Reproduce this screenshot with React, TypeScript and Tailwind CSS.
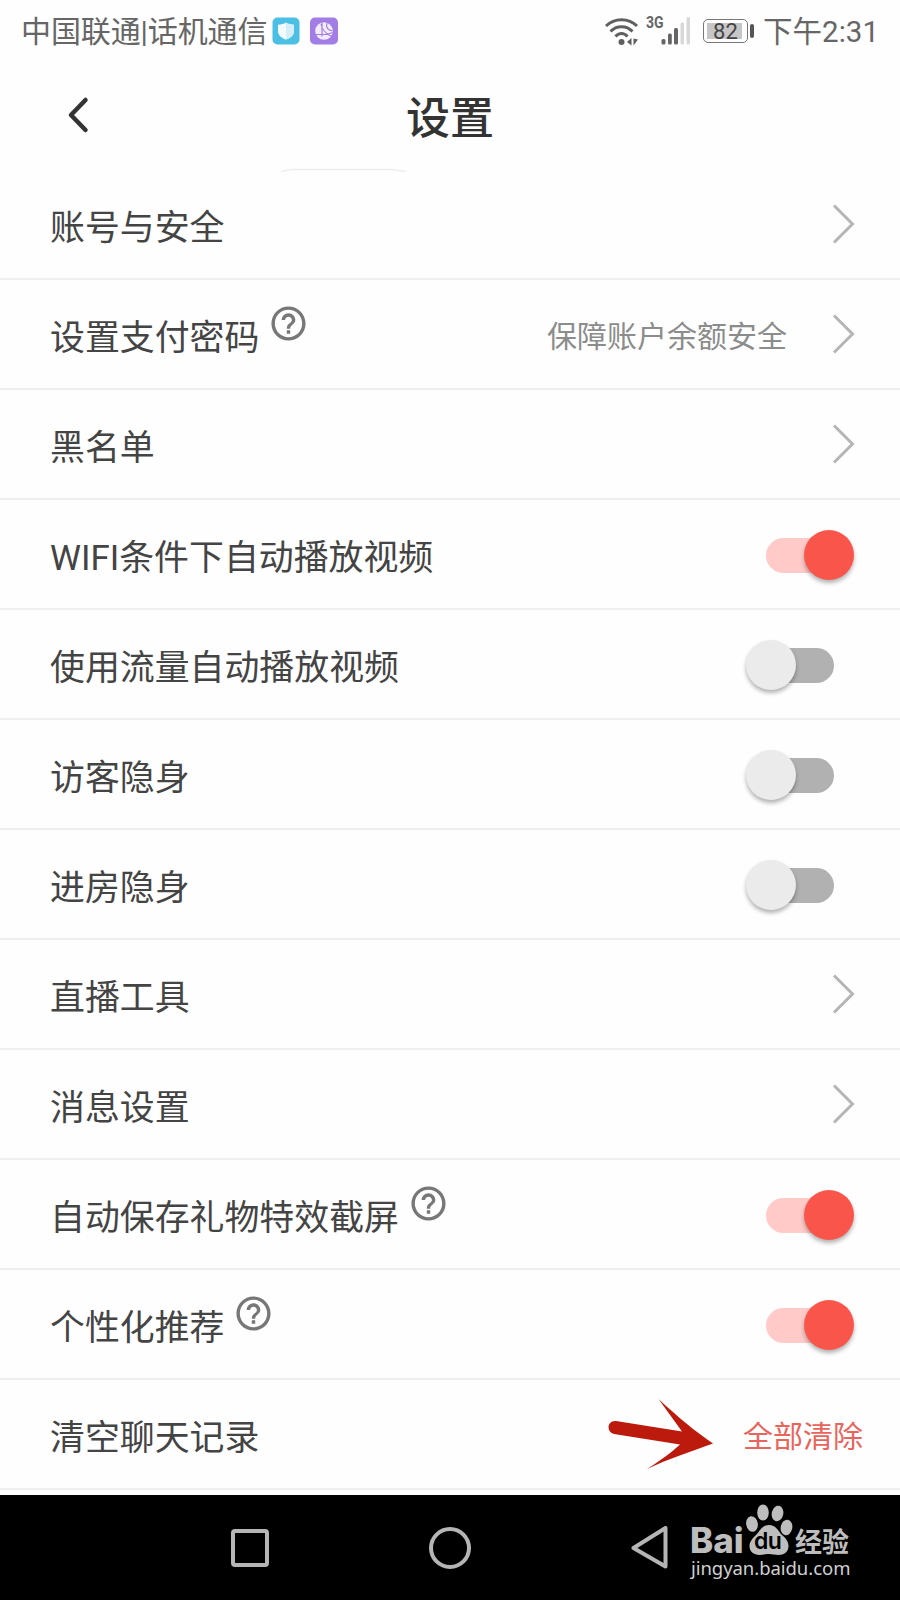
import clsx from "clsx";
import { MdHelpOutline } from "react-icons/md";

interface SettingItem {
  label: string;
  help?: boolean;
  hint?: string;
  toggle?: boolean; // undefined = 不是开关行
  action?: string;
}

const ITEMS: SettingItem[] = [
  { label: "账号与安全" },
  { label: "设置支付密码", help: true, hint: "保障账户余额安全" },
  { label: "黑名单" },
  { label: "WIFI条件下自动播放视频", toggle: true },
  { label: "使用流量自动播放视频", toggle: false },
  { label: "访客隐身", toggle: false },
  { label: "进房隐身", toggle: false },
  { label: "直播工具" },
  { label: "消息设置" },
  { label: "自动保存礼物特效截屏", help: true, toggle: true },
  { label: "个性化推荐", help: true, toggle: true },
  { label: "清空聊天记录", action: "全部清除" },
];

function ShieldIcon() {
  return (
    <svg width="28" height="28" viewBox="0 0 28 28">
      <rect x="0.5" y="0.5" width="27" height="27" rx="5" fill="#4bbfe4" />
      <path d="M14 5.500c2 1.500 4.700 2 8 2.200v6.300c0 4.500-3.500 7-8 8.500-4.500-1.500-8-4-8-8.500V7.700c3.300-.2 6-.7 8-2.200z" fill="#f4fbfe" />
      <path d="M14 5.500c2 1.500 4.700 2 8 2.200v6.300c0 4.500-3.500 7-8 8.500z" fill="#d5effa" />
    </svg>
  );
}

function GlobeIcon() {
  return (
    <svg width="28" height="28" viewBox="0 0 28 28">
      <rect x="0" y="0.5" width="28" height="27" rx="5" fill="#a27de6" />
      <circle cx="14" cy="14" r="8.800" fill="#f3ecff" />
      <path d="M12 5.500v14M5.500 17.500h11l6-2M11 7c1 5 5 10 10 12M17 6c-1.500 4 1 8 5.500 7.500" stroke="#a27de6" strokeWidth="1.200" fill="none" />
    </svg>
  );
}

function WifiIcon() {
  return (
    <svg width="34" height="29" viewBox="0 0 34 29" fill="none" stroke="#5f5f5f" strokeWidth="3">
      <path d="M1 9C9.500 0.500 23.500 0.500 32 9" />
      <path d="M5.500 14.500C11.500 8 21.500 8 27.500 14.500" />
      <path d="M10.500 19.500C14 15.500 19 15.500 22.500 19.500" />
      <circle cx="16.500" cy="25" r="3" fill="#5f5f5f" stroke="none" />
      <path d="M26.500 21v7.500l-4.500-3.500zM28.500 21.500v7l4.500-6z" fill="#5f5f5f" stroke="none" />
    </svg>
  );
}

function SignalIcon() {
  return (
    <svg width="30" height="28" viewBox="0 0 30 28">
      <rect x="0.500" y="22" width="4" height="5.500" rx="1.500" fill="#666" />
      <rect x="7" y="16.500" width="3.800" height="11" rx="1.500" fill="#666" />
      <rect x="13" y="11" width="4" height="16.500" rx="1.500" fill="#666" />
      <rect x="19.500" y="5.500" width="3.500" height="22" rx="1.500" fill="#d8d8d8" />
      <rect x="25.500" y="0" width="3.500" height="27.500" rx="1.500" fill="#d8d8d8" />
    </svg>
  );
}

function StatusBar() {
  return (
    <div className="flex h-[62px] items-center pl-[21px] pr-[21px] text-[30px] leading-none text-[#666]">
      <span className="mt-[2px] whitespace-nowrap tracking-[-0.1px]">中国联通|话机通信</span>
      <div className="ml-[5px] flex gap-[10px]">
        <ShieldIcon />
        <GlobeIcon />
      </div>
      <div className="ml-auto flex items-center">
        <WifiIcon />
        <span className="mb-[16px] ml-[7px] w-[15px] origin-left scale-x-[0.85] text-[16.5px] font-bold">3G</span>
        <SignalIcon />
        <div className="ml-[12px] flex h-[24px] w-[45px] items-center rounded-[5px] border border-[#777] p-[3px]">
          <div className="h-full w-[35px] bg-[#c6c6c6] pl-[6px] text-[22px] leading-[17px] text-[#444]">82</div>
        </div>
        <div className="ml-[2px] h-[14px] w-[4px] rounded-[2px] bg-[#555]" />
        <span className="ml-[9px] mt-[3px] whitespace-nowrap text-[29.5px]">下午2:31</span>
      </div>
    </div>
  );
}

function Header() {
  return (
    <div className="flex h-[108px] flex-col">
      <div className="grid h-[106px] shrink-0 grid-cols-[1fr_auto_1fr] items-center">
        <svg className="-mt-[1px] ml-[66px]" width="24" height="40" viewBox="0 0 24 40" fill="none" stroke="#333" strokeWidth="4.500" strokeLinecap="round" strokeLinejoin="round">
          <path d="M19.500 5L5 20l14.500 15" />
        </svg>
        <h1 className="mt-[8px] text-[44px] font-medium leading-none text-[#333]">设置</h1>
      </div>
      <svg className="ml-[281px] shrink-0" width="125" height="6" viewBox="0 0 125 6" fill="none" stroke="#ededed" strokeWidth="1.500">
        <path d="M0 3.500L10 1.500h100l15 2" />
      </svg>
    </div>
  );
}

function Chevron() {
  return (
    <svg className="-mr-[1px]" width="23" height="40" viewBox="0 0 23 40" fill="none" stroke="#b5b5b5" strokeWidth="3">
      <path d="M2 1.500L20.500 20 2 38.500" />
    </svg>
  );
}

function Toggle({ on }: { on: boolean }) {
  return (
    <div className={clsx("relative mt-[2px] mr-[20px] h-[35px] w-[68px] rounded-full", on ? "bg-[#ffcac8]" : "bg-[#b1b1b1]")}>
      <div
        className={clsx(
          "absolute -top-[8px] size-[50px] rounded-full shadow-[0_3px_4px_rgba(0,0,0,0.3)]",
          on ? "left-[38px] bg-[#fa554b]" : "-left-[20px] bg-[#ebebeb]",
        )}
      />
    </div>
  );
}

function PointerArrow() {
  return (
    <svg width="106" height="72" viewBox="0 0 106 72" fill="#bb1a0c">
      <path d="M8 23L74 33.500 50.500 1C71 20 88 34 105 45.500 80 54.500 60 61 39 71 53 62 64 54 72 46.500L6 36C-2 34-1 22 8 23z" />
    </svg>
  );
}

function SettingRow({ item }: { item: SettingItem }) {
  return (
    <div className="flex h-[110px] items-center border-b-2 border-[#efefef] pl-[50px] pr-[46px]">
      <span className="mt-[11px] text-[34.9px] leading-none whitespace-nowrap text-[#444]">{item.label}</span>
      {item.help && <MdHelpOutline size={41} className="mb-[21px] ml-[9px] text-[#777]" />}
      <div className="ml-auto flex items-center">
        {item.hint && <span className="mr-[45px] mt-[6px] text-[30px] leading-none text-[#8c8c8c]">{item.hint}</span>}
        {item.toggle !== undefined && <Toggle on={item.toggle} />}
        {item.action && (
          <div className="-mr-[9px] flex items-center gap-[29px]">
            <PointerArrow />
            <span className="mt-[6px] text-[30px] leading-none text-[#e8645c]">{item.action}</span>
          </div>
        )}
        {item.toggle === undefined && !item.action && <Chevron />}
      </div>
    </div>
  );
}

function Paw() {
  return (
    <svg width="50" height="52" viewBox="0 0 50 52" fill="#bdbdbd">
      <ellipse cx="7" cy="20" rx="5.800" ry="7.800" transform="rotate(-10 7 20)" />
      <ellipse cx="18" cy="8.500" rx="5.800" ry="8" />
      <ellipse cx="32.500" cy="9.500" rx="5.800" ry="7.800" transform="rotate(12 32.500 9.500)" />
      <ellipse cx="41.500" cy="23.500" rx="5.800" ry="7.800" transform="rotate(10 41.500 23.500)" />
      <path d="M24 21c7 0 9 6 13 10 4 3.500 6.500 6.500 6.500 11 0 6-4.500 9-10 9-4 0-6-1-9.500-1s-5.500 1-9.500 1c-6 0-10-3.500-10-9 0-4.500 3-7.500 6.500-11 4-4 6-10 13-10z" />
    </svg>
  );
}

function Watermark() {
  return (
    <div className="absolute left-[690px] top-[9px] w-[164px] text-[#bdbdbd]">
      <div className="flex h-[53px] items-end">
        <span className="w-[57px] font-[Inter,sans-serif] text-[35px] leading-[33px] font-extrabold whitespace-nowrap">Bai</span>
        <div className="relative -ml-[2px] mb-[1px]">
          <Paw />
          <span className="absolute left-[9px] top-[25px] font-[Inter,sans-serif] text-[23px] leading-[24px] font-semibold tracking-[-0.5px] text-black">du</span>
        </div>
        <span className="text-[27px] leading-[27px] font-bold whitespace-nowrap">经验</span>
      </div>
      <div className="ml-[1px] font-[Noto_Sans,sans-serif] text-[18.5px] leading-[21px] tracking-[-0.05px] whitespace-nowrap text-[#d0d0d0]">
        jingyan.baidu.com
      </div>
    </div>
  );
}

function NavBar() {
  return (
    <div className="relative flex h-[105px] items-center bg-black">
      <div className="ml-[231px] size-[38px] rounded-[4px] border-4 border-[#b5b5b5]" />
      <div className="ml-[160px] size-[42px] rounded-full border-4 border-[#b5b5b5]" />
      <svg className="ml-[160px]" width="38" height="44" viewBox="0 0 38 44" fill="none" stroke="#b5b5b5" strokeWidth="4" strokeLinejoin="round">
        <path d="M34.500 2v38.500L2.500 22z" />
      </svg>
      <Watermark />
    </div>
  );
}

export default function App() {
  return (
    <div className="flex h-[1600px] w-[900px] flex-col overflow-hidden bg-[#fefefe] font-[Roboto,'Noto_Sans_CJK_SC',sans-serif]">
      <StatusBar />
      <Header />
      <div className="flex h-[1325px] flex-col">
        {ITEMS.map((item) => (
          <SettingRow key={item.label} item={item} />
        ))}
      </div>
      <NavBar />
    </div>
  );
}
